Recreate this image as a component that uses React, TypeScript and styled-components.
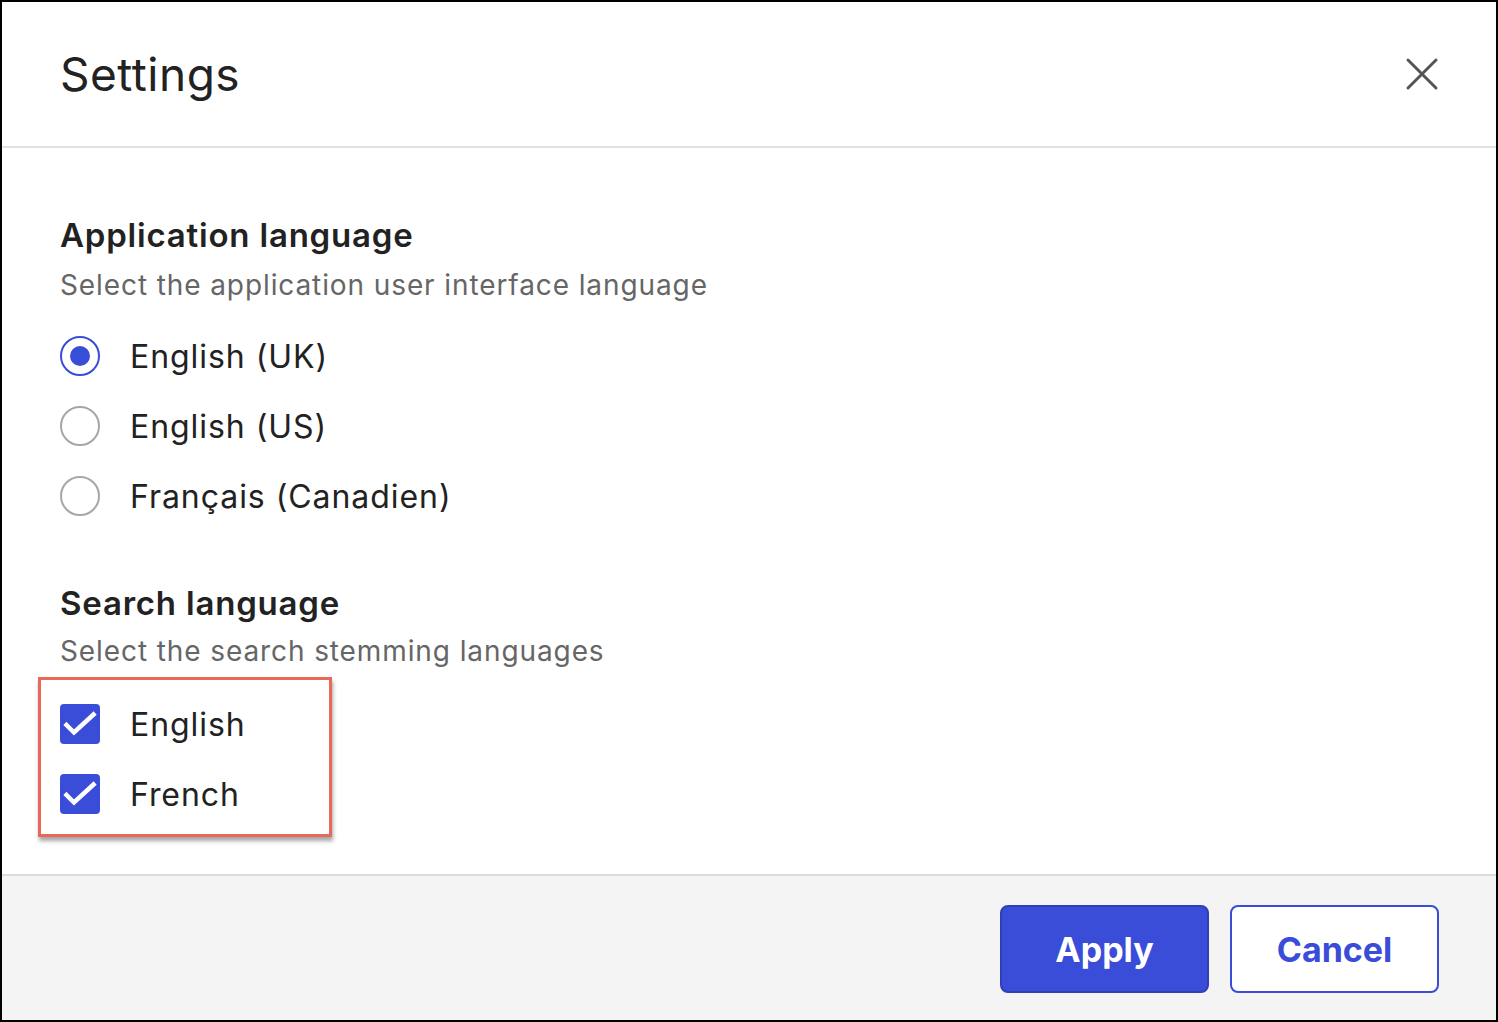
import React, { useState } from "react";
import styled, { createGlobalStyle } from "styled-components";

// Estilos globais
const GlobalStyle = createGlobalStyle`
  html, body {
    margin: 0;
    padding: 0;
    background: #ffffff;
  }
  * {
    box-sizing: border-box;
  }
`;

const BLUE = "#3a4dd8";

const Dialog = styled.div`
  width: 1498px;
  height: 1022px;
  border: 2px solid #000000;
  display: flex;
  flex-direction: column;
  font-family: Inter, "Noto Sans", "Liberation Sans", sans-serif;
  color: #222222;
  background: #ffffff;
`;

const Header = styled.div`
  height: 146px;
  flex-shrink: 0;
  display: flex;
  align-items: center;
  justify-content: space-between;
  padding: 0 57px 0 58px;
  border-bottom: 2px solid #e2e2e2;
`;

const Title = styled.h1`
  margin: 0;
  font-size: 46px;
  font-weight: 400;
  letter-spacing: 0.5px;
  color: #222222;
`;

const CloseButton = styled.button`
  width: 34px;
  height: 34px;
  border: none;
  background: transparent;
  padding: 0;
  cursor: pointer;
  display: flex;
  align-items: center;
  justify-content: center;
`;

const Body = styled.div`
  flex: 1;
  display: flex;
  flex-direction: column;
  padding: 67px 58px 0 58px;
`;

const Section = styled.section<{ $gapTop?: number }>`
  display: flex;
  flex-direction: column;
  margin-top: ${(p) => p.$gapTop ?? 0}px;
`;

const SectionTitle = styled.h2`
  margin: 0;
  font-size: 33px;
  line-height: 40px;
  font-weight: 600;
  letter-spacing: 0.8px;
  color: #222222;
`;

const SectionHint = styled.p<{ $gap: number }>`
  margin: ${(p) => p.$gap}px 0 0 0;
  font-size: 28px;
  line-height: 36px;
  letter-spacing: 0.9px;
  color: #666666;
`;

const OptionList = styled.div`
  display: flex;
  flex-direction: column;
  gap: 20px;
  margin-top: 28px;
`;

const OptionRow = styled.label`
  height: 50px;
  display: flex;
  align-items: center;
  gap: 30px;
  font-size: 32px;
  letter-spacing: 0.95px;
  color: #222222;
  cursor: pointer;
`;

const RadioCircle = styled.span<{ $checked: boolean }>`
  width: 40px;
  height: 40px;
  border-radius: 50%;
  border: 2px solid ${(p) => (p.$checked ? BLUE : "#a3a7ab")};
  display: flex;
  align-items: center;
  justify-content: center;
  flex-shrink: 0;

  &::after {
    content: "";
    width: 20px;
    height: 20px;
    border-radius: 50%;
    background: ${BLUE};
    display: ${(p) => (p.$checked ? "block" : "none")};
  }
`;

const Highlight = styled.div`
  width: 294px;
  margin: 8px 0 0 -22px;
  padding: 19px 19px 15px 19px;
  border: 3px solid #e8685a;
  box-shadow: 1px 4px 4px rgba(0, 0, 0, 0.35);
`;

const CheckList = styled.div`
  display: flex;
  flex-direction: column;
  gap: 20px;
`;

const CheckBox = styled.span<{ $checked: boolean }>`
  width: 40px;
  height: 40px;
  border-radius: 4px;
  background: ${(p) => (p.$checked ? BLUE : "#ffffff")};
  border: ${(p) => (p.$checked ? "none" : "2px solid #a3a7ab")};
  display: flex;
  align-items: center;
  justify-content: center;
  flex-shrink: 0;
`;

const Footer = styled.div`
  height: 146px;
  flex-shrink: 0;
  background: #f4f4f4;
  border-top: 2px solid #dcdcdc;
  display: flex;
  align-items: center;
  justify-content: flex-end;
  gap: 21px;
  padding: 2px 57px 0 0;
`;

const ActionButton = styled.button<{ $primary?: boolean }>`
  width: 209px;
  height: 88px;
  border-radius: 8px;
  font-family: inherit;
  font-size: 34px;
  font-weight: 700;
  cursor: pointer;
  background: ${(p) => (p.$primary ? BLUE : "#ffffff")};
  color: ${(p) => (p.$primary ? "#ffffff" : BLUE)};
  border: 2px solid ${(p) => (p.$primary ? "#2f3fb5" : BLUE)};
`;

const languages = ["English (UK)", "English (US)", "Français (Canadien)"];
const searchLanguages = ["English", "French"];

export default function App() {
  const [appLang, setAppLang] = useState("English (UK)");
  const [searchLang, setSearchLang] = useState<string[]>(["English", "French"]);

  function toggle(lang: string) {
    setSearchLang((prev) =>
      prev.includes(lang) ? prev.filter((l) => l !== lang) : [...prev, lang]
    );
  }

  return (
    <>
      <GlobalStyle />
      <Dialog>
        <Header>
          <Title>Settings</Title>
          <CloseButton aria-label="Close">
            <svg width="34" height="34" viewBox="0 0 34 34">
              <path d="M3 3 L31 31 M31 3 L3 31" stroke="#555555" strokeWidth="3" strokeLinecap="round" />
            </svg>
          </CloseButton>
        </Header>
        <Body>
          <Section>
            <SectionTitle>Application language</SectionTitle>
            <SectionHint $gap={12}>Select the application user interface language</SectionHint>
            <OptionList>
              {languages.map((lang) => (
                <OptionRow key={lang} onClick={() => setAppLang(lang)}>
                  <RadioCircle $checked={appLang === lang} />
                  {lang}
                </OptionRow>
              ))}
            </OptionList>
          </Section>
          <Section $gapTop={62}>
            <SectionTitle>Search language</SectionTitle>
            <SectionHint $gap={10}>Select the search stemming languages</SectionHint>
            <Highlight>
              <CheckList>
                {searchLanguages.map((lang) => {
                  const checked = searchLang.includes(lang);
                  return (
                    <OptionRow key={lang} onClick={() => toggle(lang)}>
                      <CheckBox $checked={checked}>
                        {checked && (
                          <svg width="40" height="40" viewBox="0 0 40 40">
                            <path d="M6.5 21 L14 28.5 L33.5 10.5" fill="none" stroke="#ffffff" strokeWidth="4.5" strokeLinecap="square" />
                          </svg>
                        )}
                      </CheckBox>
                      {lang}
                    </OptionRow>
                  );
                })}
              </CheckList>
            </Highlight>
          </Section>
        </Body>
        <Footer>
          <ActionButton $primary>Apply</ActionButton>
          <ActionButton>Cancel</ActionButton>
        </Footer>
      </Dialog>
    </>
  );
}
